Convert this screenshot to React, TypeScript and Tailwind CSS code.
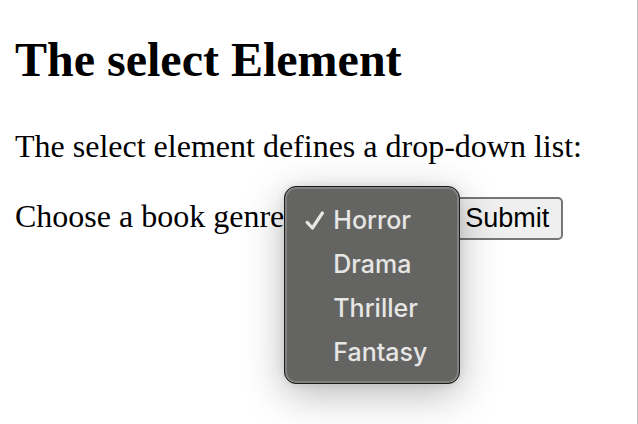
import { useState } from 'react';

const genres = ['Horror', 'Drama', 'Thriller', 'Fantasy'];

function CheckMark() {
  return (
    <svg viewBox="0 0 20 20" className="size-5" fill="none" aria-hidden="true">
      <path
        d="M2.2 11.4 7.4 17 17.4 2"
        stroke="currentColor"
        strokeWidth="3.2"
        strokeLinecap="round"
        strokeLinejoin="round"
      />
    </svg>
  );
}

export default function App() {
  const [genre, setGenre] = useState('Horror');

  return (
    <main className="min-h-screen border-r border-[#c0c0c0] bg-white px-[15px] pt-8 font-['Liberation_Serif',serif] text-black">
      <h2 className="text-[48px] leading-[56px] font-bold">The select Element</h2>
      <p className="mt-10 text-[32px] leading-9">The select element defines a drop-down list:</p>

      <form className="mt-[33px] flex items-baseline" onSubmit={(e) => e.preventDefault()}>
        <label htmlFor="genre" className="text-[32px] leading-9 whitespace-nowrap">
          Choose a book genre
        </label>
        <div className="relative w-[167px] shrink-0 self-stretch">
          <button
            id="genre"
            type="button"
            aria-haspopup="listbox"
            aria-expanded="true"
            aria-controls="genre-list"
            className="h-full w-full rounded-[5px] border-2 border-[#767676] bg-[#efefef]"
          />
          <ul
            id="genre-list"
            role="listbox"
            aria-labelledby="genre"
            className="absolute -top-[11px] left-0 z-10 w-44 rounded-xl border border-[#1c1c1c] bg-[#646462] pt-3 pb-2 font-[Inter,sans-serif] text-[25px] font-medium text-[#e6e6e5] shadow-[inset_0_0_0_2px_#81817f,0_10px_40px_rgba(0,0,0,0.28),0_0_8px_rgba(0,0,0,0.10)]"
          >
            {genres.map((name) => (
              <li
                key={name}
                role="option"
                aria-selected={name === genre}
                onClick={() => setGenre(name)}
                className="flex h-11 items-center pl-5"
              >
                <span className="w-7">{name === genre && <CheckMark />}</span>
                {name}
              </li>
            ))}
          </ul>
        </div>
        <button
          type="submit"
          className="rounded-[5px] border-2 border-[#767676] bg-[#efefef] px-3 font-['Liberation_Sans',sans-serif] text-[27px] leading-[39px]"
        >
          Submit
        </button>
      </form>
    </main>
  );
}
